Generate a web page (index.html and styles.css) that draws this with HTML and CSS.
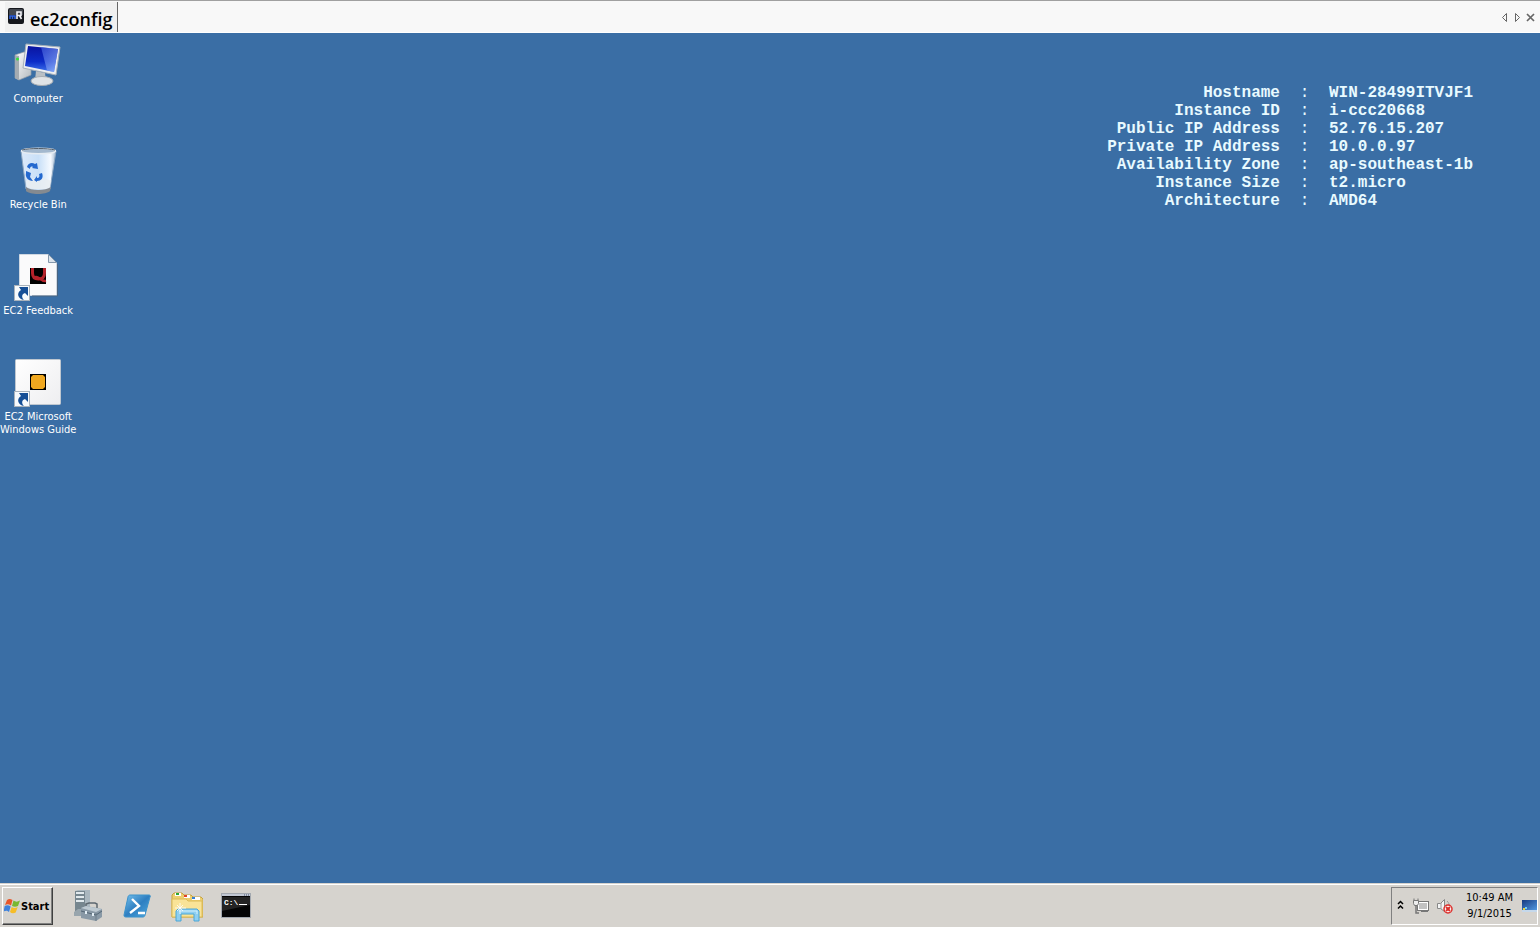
FILE: index.html
```html
<!DOCTYPE html>
<html lang="en">
<head>
<meta charset="utf-8">
<title>ec2config</title>
<link rel="stylesheet" href="styles.css">
</head>
<body>
<header class="tabbar">
<a class="tab" href="#desktop">
<svg class="tab-icon" width="18" height="18" viewBox="0 0 18 18">
<rect x="1" y="1" width="16" height="16" rx="2" fill="#15171c"/>
<path d="M3 2h12l1 1v5H2V3z" fill="#43474f"/>
<path d="M3 12V9h5v3M5.500 9v3" fill="none" stroke="#2f62e0" stroke-width="1.600"/>
<path d="M10 12V5h4v3.500h-4M12.500 8.500L14.500 12" fill="none" stroke="#f4f4f8" stroke-width="1.600"/>
</svg>
<span>ec2config</span>
</a>
<div class="tab-controls">
<button type="button" aria-label="Previous tab"><svg width="9" height="11" viewBox="0 0 9 11"><path d="M6.500 1.500v8L2.500 5.500z" fill="none" stroke="#666"/></svg></button>
<button type="button" aria-label="Next tab"><svg width="9" height="11" viewBox="0 0 9 11"><path d="M2.500 1.500v8L6.500 5.500z" fill="none" stroke="#666"/></svg></button>
<button type="button" aria-label="Close tab"><svg width="9" height="11" viewBox="0 0 9 11"><path d="M1 2l7 7M8 2L1 9" stroke="#666" stroke-width="1.700"/></svg></button>
</div>
</header>

<main class="desktop" id="desktop">
<nav class="shortcuts">
<a class="shortcut" href="#computer">
<svg width="48" height="48" viewBox="0 0 48 48">
<defs>
<linearGradient id="screen" x1="0" y1="0" x2="0" y2="1"><stop offset="0" stop-color="#0a14a0"/><stop offset=".6" stop-color="#0c2cc8"/><stop offset="1" stop-color="#3f74ec"/></linearGradient>
<linearGradient id="glare" x1="0" y1="0" x2="1" y2="1"><stop offset="0" stop-color="#3c5ce0"/><stop offset="1" stop-color="#a9c8ff"/></linearGradient>
<linearGradient id="metal" x1="0" y1="0" x2="1" y2="1"><stop offset="0" stop-color="#fff"/><stop offset="1" stop-color="#b4babf"/></linearGradient>
</defs>
<path d="M1 14l9-3 7 2v21L5 39l-4-2z" fill="url(#metal)" stroke="#9aa1a8" stroke-width=".700"/>
<path d="M1 14l4 1v24l-4-2z" fill="#a4abb1"/>
<circle cx="3.500" cy="18" r="1.500" fill="#35e03a"/>
<path d="M22 30l9 2 1 8-11-1z" fill="#b9bfc4"/>
<ellipse cx="28" cy="40" rx="11" ry="4.500" fill="#e0e3e6" stroke="#a7adb3"/>
<path d="M12 3l34 3-4 28-33-7z" fill="#eceef0" stroke="#a6b0ba"/>
<path d="M14 5l30 3-4 23-29-6z" fill="url(#screen)"/>
<path d="M27 6l17 2-4 23-7-1.500z" fill="url(#glare)" opacity=".650"/>
</svg>
<span>Computer</span>
</a>
<a class="shortcut" href="#recycle-bin">
<svg width="48" height="48" viewBox="0 0 48 48">
<defs><linearGradient id="glass"><stop offset="0" stop-color="#dbe9fa"/><stop offset=".500" stop-color="#c9e0f8"/><stop offset=".850" stop-color="#f6faff"/><stop offset="1" stop-color="#9fb6cf"/></linearGradient></defs>
<path d="M7 4l5 38c3 5 21 5 24 0l6-38z" fill="url(#glass)" stroke="#8da7c2"/>
<path d="M12 40c5 4 19 4 25 0l-1 4c-4 4-20 4-24 0z" fill="#858a90"/>
<path d="M12 34c5-4 19-4 25 0l-1 6c-5 3-18 3-23 0z" fill="#e9edf1" opacity=".850"/>
<ellipse cx="24.500" cy="4" rx="17" ry="2.800" fill="#a3b8ce" stroke="#e6ecf2" stroke-width="1.400"/>
<path d="M8 3c8-2 25-2 33 0" fill="none" stroke="#535d68"/>
<path d="M13 20c1-4 5-5 8-3l2-1 1 6-6-1 1-1c-2-1-3 0-3 2zM12 24l5 2-1 4 3 4c-5 0-8-4-7-8zM20 33l3-4v2c2 0 3-1 2-4l3-1c2 5-1 8-5 8v1z" fill="#2469cf"/>
</svg>
<span>Recycle Bin</span>
</a>
<a class="shortcut" href="#feedback">
<svg width="48" height="48" viewBox="0 0 48 48">
<path d="M5.500 1.500h29l8 8v33h-37z" fill="#fafafb" stroke="#d0d8e2"/>
<path d="M34.500 1.500v8h8z" fill="#dce4ec" stroke="#8497ab"/>
<path d="M43.500 11v32H18" fill="none" stroke="#4a6480"/>
<rect x="16" y="15" width="16" height="16" fill="#000"/>
<path d="M18.500 15v5c0 4 2 6 6 6s6-2 6-6v-5" fill="none" stroke="#b4222a" stroke-width="3"/>
<path d="M20 25c4-4 6 4 12 3" fill="none" stroke="#b4222a" stroke-width="2.500"/>
<g id="link-arrow">
<rect x=".5" y="32.500" width="15" height="15" fill="#f7fafc" stroke="#aab3bc"/>
<path d="M5 34h9v9l-3-3c-3 1-4 4-1 7-6-1-8-7-3-10z" fill="#164f96"/>
</g>
</svg>
<span>EC2 Feedback</span>
</a>
<a class="shortcut" href="#guide">
<svg width="48" height="48" viewBox="0 0 48 48">
<defs><linearGradient id="paper" x1="0" y1="0" x2="1" y2="1"><stop offset="0" stop-color="#fff"/><stop offset="1" stop-color="#eeeef0"/></linearGradient></defs>
<rect x="1.500" y=".5" width="45" height="45" rx="1" fill="url(#paper)" stroke="#bfc7d0"/>
<rect x="16" y="15" width="16" height="16" fill="#000"/>
<path d="M19 16h10l2 2v10l-2 2H19l-2-2V18z" fill="#f0a820"/>
<use href="#link-arrow"/>
</svg>
<span>EC2 Microsoft<br>Windows Guide</span>
</a>
</nav>

<table class="instance-info">
<tr><th scope="row">Hostname</th><td class="colon">:</td><td>WIN-28499ITVJF1</td></tr>
<tr><th scope="row">Instance ID</th><td class="colon">:</td><td>i-ccc20668</td></tr>
<tr><th scope="row">Public IP Address</th><td class="colon">:</td><td>52.76.15.207</td></tr>
<tr><th scope="row">Private IP Address</th><td class="colon">:</td><td>10.0.0.97</td></tr>
<tr><th scope="row">Availability Zone</th><td class="colon">:</td><td>ap-southeast-1b</td></tr>
<tr><th scope="row">Instance Size</th><td class="colon">:</td><td>t2.micro</td></tr>
<tr><th scope="row">Architecture</th><td class="colon">:</td><td>AMD64</td></tr>
</table>
</main>

<footer class="taskbar">
<button type="button" class="start">
<svg width="16" height="16" viewBox="0 0 16 16">
<path d="M3 2c2-1.500 3-1.500 5.500 0L7 7.500C5 6 3 6 1 7z" fill="#e8562a"/>
<path d="M9.500 2.500c2 1.500 4 1.500 6.500 0l-2 5.500c-2 1-4 1-6 0z" fill="#78b832"/>
<path d="M.7 8c2-1 4-1 6 .500L5 14c-2-1.500-3-1.500-5.500-.5z" fill="#3f82dc"/>
<path d="M7.700 9c2 1.500 4 1 6 0l-2 5.500c-2 1-4 1-5.700-.5z" fill="#f6bd28"/>
</svg>
<span>Start</span>
</button>
<div class="quick-launch">
<button type="button" aria-label="Server Manager">
<svg width="32" height="32" viewBox="0 0 32 32">
<path d="M2 1l3-1h12v22l-3 2H2z" fill="#aab7bf"/>
<path d="M2 1h10v23H2z" fill="#76868f"/>
<path d="M3 3h8M3 7h8M3 11h8" stroke="#e1e9ed" stroke-width="2"/>
<path d="M1 22l4-3h9v5l-4 2H1z" fill="#98a5ad"/>
<path d="M13 17v-3l3-1h6l2 1v4" fill="none" stroke="#5d6870" stroke-width="1.500"/>
<path d="M8 18l5-2 16 3v8l-6 4-15-3z" fill="#8999a6"/>
<path d="M8 18l5-2 16 3-6 3z" fill="#bdc9d1"/>
<path d="M8 21l15 4 6-4" fill="none" stroke="#536675"/>
<path d="M23 23v8" stroke="#6d7d89"/><path d="M13 21v3M20 23v3" stroke="#e2edf4" stroke-width="2"/>
</svg>
</button>
<button type="button" aria-label="Windows PowerShell">
<svg width="32" height="32" viewBox="0 0 32 32">
<defs><linearGradient id="shell" x1="0" y1="0" x2="1" y2="1"><stop offset="0" stop-color="#76c2ee"/><stop offset=".500" stop-color="#2f7fc1"/><stop offset="1" stop-color="#4fa9df"/></linearGradient></defs>
<path d="M8 5h19c1 0 2 1 1 2l-5 18c0 1-1 2-2 2H4c-2 0-2-1-2-2L6 7c0-1 1-2 2-2z" fill="url(#shell)" stroke="#3b92cb"/>
<path d="M10 9l7 7-9 7M16 23h7" fill="none" stroke="#fff" stroke-width="2.400"/>
</svg>
</button>
<button type="button" aria-label="Windows Explorer">
<svg width="32" height="32" viewBox="0 0 32 32">
<path d="M1 27V5l2-2h8l2 2h7l2 2h8l2 2v18z" fill="#edcf6f" stroke="#c6a340"/>
<path d="M4 3h6v3H4zM13 5h6v3h-6zM21 7h8v3h-8z" fill="#fff"/>
<path d="M5 3h3v2H5z" fill="#2aa733"/><path d="M13 5h3v2h-3z" fill="#e04328"/><path d="M21 7h3v2h-3z" fill="#3581d6"/>
<path d="M1 9h14l2 2h14v16H1z" fill="#f9e397" stroke="#dcbb59"/>
<path d="M5 31V21l2-2h19l2 2v10h-5v-7H10v7z" fill="#8fcff0" stroke="#4ba6d6"/>
<path d="M8 21h18v3" fill="none" stroke="#d3f0fc"/>
<path d="M9 13v11M4 18h11M6 15l6 6M12 15l-6 6" stroke="#fff" stroke-width=".800"/>
</svg>
</button>
<button type="button" aria-label="Command Prompt">
<svg width="32" height="32" viewBox="0 0 32 32">
<rect x="1.500" y="3.500" width="29" height="24" fill="#050505" stroke="#a3a8af"/>
<path d="M2 4h28v2H2z" fill="#c2c8d4"/><path d="M24 5h1M26 5h1M28 5h1" stroke="#43506c"/>
<path d="M2 7h28v8L2 21z" fill="#242424"/>
<text class="prompt" x="4" y="15">C:\</text>
<path d="M19 14.500h8" stroke="#fff"/>
</svg>
</button>
</div>
<div class="tray">
<button type="button" aria-label="Show hidden icons"><svg width="9" height="12" viewBox="0 0 9 12"><path d="M2 4l2.500-2.500L7 4M2 8.500L4.500 6 7 8.500" fill="none" stroke="#000" stroke-width="1.500"/></svg></button>
<button type="button" aria-label="Network">
<svg width="16" height="16" viewBox="0 0 16 16">
<rect x="4.500" y="3.500" width="11" height="9" fill="#fff" stroke="#777"/><rect x="6" y="5" width="8" height="6" fill="#c2c2c2"/>
<path d="M8 13.500h7M11 12v2" stroke="#777"/>
<path d="M1 .500v2M5 .500v2" stroke="#777"/><path d="M.500 2.500h5v3l-1 2h-3l-1-2z" fill="#eee" stroke="#777"/><path d="M3 8v7h3" fill="none" stroke="#777" stroke-width="1.500"/>
</svg>
</button>
<button type="button" aria-label="Sound: no audio device">
<svg width="16" height="16" viewBox="0 0 16 16">
<path d="M.500 5.500h3l4-4v12l-4-3h-3z" fill="#f5f5f5" stroke="#888"/><path d="M4 5v6" stroke="#999"/><path d="M10 3c2 2 2 3 2 5" fill="none" stroke="#999"/>
<circle cx="11" cy="11" r="4" fill="#fff" stroke="#dc2f2b" stroke-width="1.500"/><path d="M9 9l4 4M13 9l-4 4" stroke="#dc2f2b" stroke-width="2"/>
</svg>
</button>
<time class="clock" datetime="2015-09-01T10:49">10:49 AM<br>9/1/2015</time>
<button type="button" aria-label="Show desktop">
<svg width="16" height="14" viewBox="0 0 16 14">
<defs><linearGradient id="mini" x1="0" y1="0" x2="1" y2="1"><stop offset="0" stop-color="#163a80"/><stop offset="1" stop-color="#5298e0"/></linearGradient></defs>
<path d="M1 1h15v10H1z" fill="url(#mini)"/><path d="M1 11h15v2H1z" fill="#c5d8eb"/>
<path d="M2 9h2v2H2z" fill="#e9d13c"/><path d="M4 8h2v2H4z" fill="#75d1f2"/>
</svg>
</button>
</div>
</footer>
</body>
</html>
```
FILE: styles.css
```css
body {
    margin: 0;
    min-height: 100vh;
    display: flex;
    flex-direction: column;
    background: #3A6EA5;
    font-family: "DejaVu Sans Condensed", "DejaVu Sans", sans-serif;
    font-size: 11px;
}
svg {
    display: block;
    flex: none;
}
button {
    padding: 0;
    border: 0;
    background: none;
    color: #000;
    font: inherit;
}
.tabbar {
    display: flex;
    justify-content: space-between;
    height: 31px;
    padding-left: 5px;
    border-top: 1px solid #A0A0A0;
    border-bottom: 1px solid #FFF;
    background: #F8F8F8;
}
.tab {
    display: flex;
    gap: 5px;
    padding: 0 5px 0 2px;
    height: 30px;
    margin-top: 1px;
    border-right: 1px solid #666;
    background: #F0F0F0;
    color: #000;
    font: 600 18px/34px "Open Sans", sans-serif;
    text-decoration: none;
}
.tab-icon {
    margin-top: 5px;
}
.tab-controls {
    display: flex;
    align-items: center;
    gap: 4px;
    padding: 2px 5px 0 0;
}
.desktop {
    flex: 1;
    display: flex;
    justify-content: space-between;
    align-items: flex-start;
}
.shortcuts {
    display: grid;
    grid-auto-rows: 106px;
    width: 76px;
    padding-top: 8px;
}
.shortcut {
    display: flex;
    flex-direction: column;
    align-items: center;
    gap: 3px;
    color: #FFF;
    line-height: 13px;
    text-align: center;
    text-decoration: none;
    white-space: nowrap;
}
.instance-info {
    margin: 51px 67px 0 0;
    border-collapse: collapse;
    color: #E8FAFF;
    font: bold 16px/18px "Liberation Mono", monospace;
}
.instance-info th, .instance-info td {
    padding: 0;
}
.instance-info th {
    text-align: right;
}
.instance-info .colon {
    width: 49px;
    font-weight: normal;
    text-align: center;
}
.taskbar {
    display: flex;
    align-items: center;
    height: 42px;
    padding: 0 2px;
    border-top: 1px solid #FFF;
    background: #D6D3CE;
    box-shadow: 0 -1px #D6D3CE;
}
.start {
    display: flex;
    align-items: center;
    gap: 1px;
    height: 38px;
    padding: 0 3px 0 1px;
    border: 1px solid;
    border-color: #FFF #404040 #404040 #FFF;
    box-shadow: inset -1px -1px #808080;
    font-weight: bold;
}
.quick-launch {
    display: flex;
    flex: 1;
    gap: 17px;
    padding-left: 20px;
}
.tray {
    display: flex;
    align-items: center;
    gap: 8px;
    height: 36px;
    padding: 0 0 0 4px;
    border: 1px solid;
    border-color: #808080 #FFF #FFF #808080;
}
.clock {
    padding-left: 5px;
    line-height: 16px;
    text-align: center;
}
.prompt {
    fill: #FFF;
    font: bold 8px "Liberation Mono", monospace;
}
```
